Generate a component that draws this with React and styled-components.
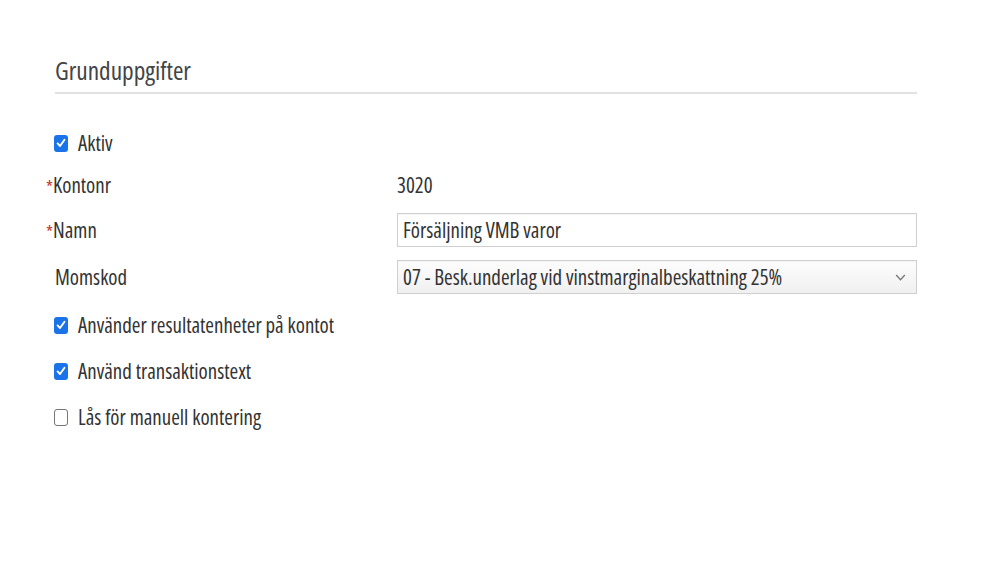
import React from "react";
import styled, { createGlobalStyle } from "styled-components";

const Global = createGlobalStyle`
  body {
    margin: 0;
    background: #ffffff;
    font-family: "Open Sans", "Liberation Sans", sans-serif;
    color: #333333;
  }
`;

const Page = styled.div`
  width: 999px;
  height: 562px;
  padding: 55px 82px 0 55px;
  box-sizing: border-box;
`;

const Heading = styled.h2`
  margin: 0;
  padding-bottom: 6px;
  font-size: 25.3px;
  font-weight: 400;
  font-stretch: condensed;
  line-height: 31px;
  color: #444444;
  border-bottom: 2px solid #e2e2e2;
`;

const Form = styled.div`
  display: grid;
  grid-template-columns: 342px 520px;
  grid-template-rows: 42px 42px 48px 46px 50px 42px 50px;
  align-items: center;
  margin-top: 28px;
  font-size: 20.9px;
  font-stretch: condensed;
`;

const CheckRow = styled.label`
  grid-column: 1 / -1;
  display: flex;
  align-items: center;
  gap: 10px;
  margin-left: -1px;
  cursor: pointer;
`;

const Box = styled.span`
  width: 14px;
  height: 17px;
  border-radius: 3px;
  box-sizing: border-box;
  display: flex;
  align-items: center;
  justify-content: center;
  background: ${(p) => (p.$checked ? "#1a73e8" : "#ffffff")};
  border: ${(p) => (p.$checked ? "none" : "1.5px solid #767676")};
`;

const Label = styled.div`
  display: flex;
  align-items: center;
  ${(p) => p.$required && "margin-left: -9px;"}
`;

const Star = styled.span`
  color: #c0392b;
  font-size: 18px;
  line-height: 1;
  margin-top: 4px;
`;

const Value = styled.div``;

const Input = styled.div`
  height: 34px;
  box-sizing: border-box;
  border: 1px solid #cfcfcf;
  background: ${(p) => (p.$select ? "linear-gradient(#fdfdfd, #f0f0f0)" : "#ffffff")};
  display: flex;
  align-items: center;
  justify-content: space-between;
  padding: 0 10px 0 5px;
  color: #333333;
  box-shadow: inset 0 1px 1px rgba(0, 0, 0, 0.04);
`;

const Check = ({ checked, children }) => (
  <CheckRow>
    <Box $checked={checked}>
      {checked && (
        <svg width="10" height="12" viewBox="0 0 10 12">
          <path d="M1.6 6.4 L4 9 L8.5 2.8" fill="none" stroke="#fff" strokeWidth="1.9" strokeLinecap="round" strokeLinejoin="round" />
        </svg>
      )}
    </Box>
    {children}
  </CheckRow>
);

export default function App() {
  return (
    <Page>
      <Global />
      <Heading>Grunduppgifter</Heading>
      <Form>
        <Check checked>Aktiv</Check>
        <Label $required>
          <Star>*</Star>Kontonr
        </Label>
        <Value>3020</Value>
        <Label $required>
          <Star>*</Star>Namn
        </Label>
        <Input>Försäljning VMB varor</Input>
        <Label>Momskod</Label>
        <Input $select>
          07 - Besk.underlag vid vinstmarginalbeskattning 25%
          <svg width="11" height="9" viewBox="0 0 11 9">
            <path d="M1.2 2 L5.5 6.8 L9.8 2" fill="none" stroke="#777" strokeWidth="1.3" />
          </svg>
        </Input>
        <Check checked>Använder resultatenheter på kontot</Check>
        <Check checked>Använd transaktionstext</Check>
        <Check>Lås för manuell kontering</Check>
      </Form>
    </Page>
  );
}
